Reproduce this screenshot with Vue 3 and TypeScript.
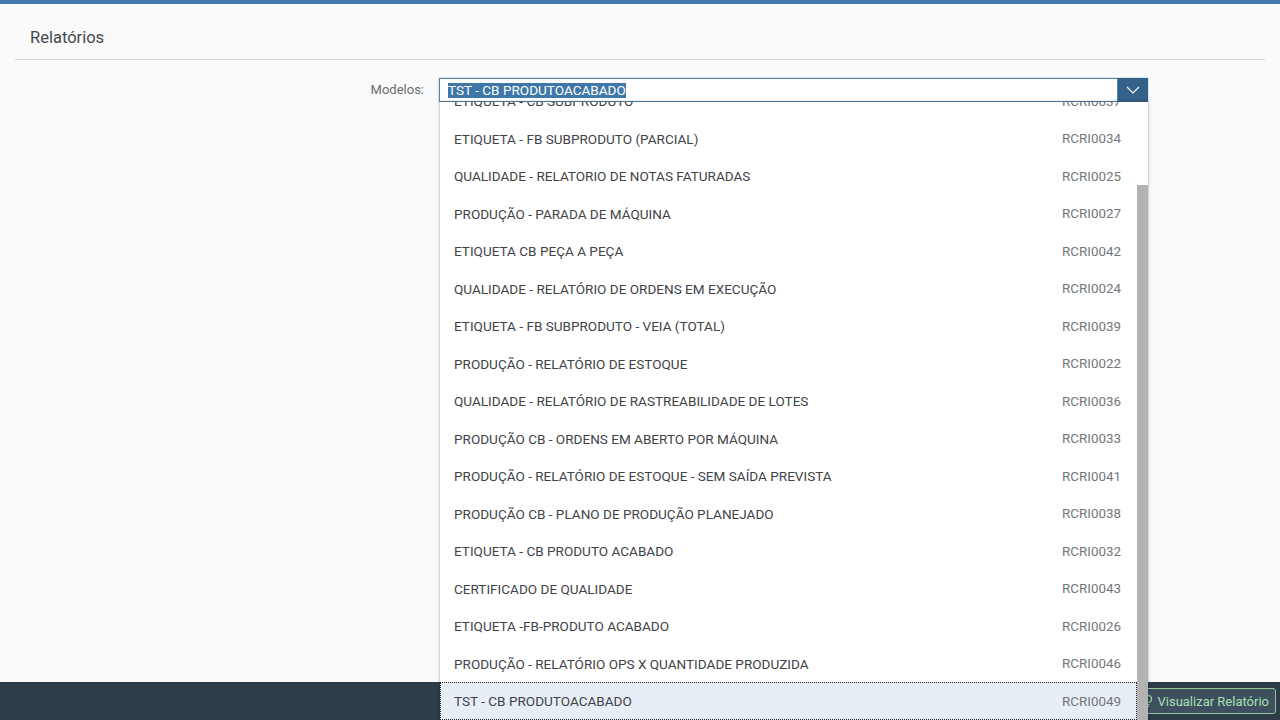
<script setup lang="ts">
const rows: [string, string][] = [
  ['ETIQUETA - CB SUBPRODUTO', 'RCRI0037'],
  ['ETIQUETA - FB SUBPRODUTO (PARCIAL)', 'RCRI0034'],
  ['QUALIDADE - RELATORIO DE NOTAS FATURADAS', 'RCRI0025'],
  ['PRODUÇÃO - PARADA DE MÁQUINA', 'RCRI0027'],
  ['ETIQUETA CB PEÇA A PEÇA', 'RCRI0042'],
  ['QUALIDADE - RELATÓRIO DE ORDENS EM EXECUÇÃO', 'RCRI0024'],
  ['ETIQUETA - FB SUBPRODUTO - VEIA (TOTAL)', 'RCRI0039'],
  ['PRODUÇÃO - RELATÓRIO DE ESTOQUE', 'RCRI0022'],
  ['QUALIDADE - RELATÓRIO DE RASTREABILIDADE DE LOTES', 'RCRI0036'],
  ['PRODUÇÃO CB - ORDENS EM ABERTO POR MÁQUINA', 'RCRI0033'],
  ['PRODUÇÃO - RELATÓRIO DE ESTOQUE - SEM SAÍDA PREVISTA', 'RCRI0041'],
  ['PRODUÇÃO CB - PLANO DE PRODUÇÃO PLANEJADO', 'RCRI0038'],
  ['ETIQUETA - CB PRODUTO ACABADO', 'RCRI0032'],
  ['CERTIFICADO DE QUALIDADE', 'RCRI0043'],
  ['ETIQUETA -FB-PRODUTO ACABADO', 'RCRI0026'],
  ['PRODUÇÃO - RELATÓRIO OPS X QUANTIDADE PRODUZIDA', 'RCRI0046'],
  ['TST - CB PRODUTOACABADO', 'RCRI0049'],
]
</script>

<template>
  <div class="page">
    <header class="title-wrap">
      <h1 class="title">Relatórios</h1>
    </header>
    <main class="form">
      <label class="label">Modelos:</label>
      <div class="combo">
        <div class="input"><span class="sel">TST - CB PRODUTOACABADO</span></div>
        <div class="arrow">
          <svg width="14" height="8" viewBox="0 0 14 8"><path d="M1 1l6 6 6-6" fill="none" stroke="#fff" stroke-width="1.1" /></svg>
        </div>
        <div class="popup">
          <div class="scroller">
            <div
              v-for="(r, i) in rows"
              :key="r[1]"
              class="row"
              :class="{ active: i === rows.length - 1 }"
            >
              <span>{{ r[0] }}</span>
              <span class="code">{{ r[1] }}</span>
            </div>
          </div>
          <div class="thumb"></div>
        </div>
      </div>
    </main>
    <footer class="footer">
      <button class="btn">
        <svg class="btn-icon" width="12" height="14" viewBox="0 0 12 14">
          <circle cx="6" cy="5" r="3.5" fill="none" stroke="#9fd8a8" stroke-width="1.2" />
          <path d="M4.5 10.5h3M5 12.5h2" stroke="#9fd8a8" stroke-width="1.2" />
        </svg>
        <span>Visualizar Relatório</span>
      </button>
    </footer>
  </div>
</template>

<style>
html, body { margin: 0; padding: 0; }
</style>

<style scoped>
.page {
  position: relative;
  width: 1280px;
  height: 720px;
  overflow: hidden;
  box-sizing: border-box;
  display: flex;
  flex-direction: column;
  background: #fafafa;
  border-top: 4px solid #427cac;
  font-family: Roboto, "Liberation Sans", sans-serif;
  color: #32363a;
}
.title-wrap {
  margin: 0 15px;
  height: 56px;
  box-sizing: border-box;
  border-bottom: 1px solid #d4d4d4;
  padding-left: 15px;
  padding-bottom: 9px;
  display: flex;
  align-items: flex-end;
}
.title {
  margin: 0;
  font-size: 16.5px;
  line-height: 24px;
  font-weight: 400;
  color: #44484c;
}
.form {
  flex: 1;
  padding-top: 18px;
  display: flex;
  align-items: flex-start;
}
.label {
  width: 424px;
  box-sizing: border-box;
  text-align: right;
  font-size: 13px;
  line-height: 24px;
  color: #6a6d70;
}
.combo {
  position: relative;
  margin-left: 15px;
  width: 709px;
  height: 24px;
  display: flex;
  box-shadow: 0 0 0 1px #d5e3ef;
}
.input {
  flex: 1;
  box-sizing: border-box;
  height: 24px;
  background: #fff;
  border: 1px solid #5b82a3;
  padding-left: 8px;
  font-size: 13.55px;
  line-height: 22px;
  color: #32363a;
  white-space: nowrap;
}
.sel { background: #3f77a8; color: #fff; display: inline-block; line-height: 15px; }
.arrow {
  width: 30px;
  height: 24px;
  background: #346187;
  display: flex;
  align-items: center;
  justify-content: center;
}
.popup {
  position: absolute;
  left: 1px;
  top: 24px;
  width: 708px;
  height: 620px;
  background: #fff;
  box-shadow: 0 0 3px rgba(0, 0, 0, 0.35);
  overflow: hidden;
  z-index: 5;
}
.scroller { margin-top: -19.75px; width: 697px; }
.row {
  box-sizing: border-box;
  height: 37.5px;
  padding: 0 16px 0 14px;
  display: flex;
  justify-content: space-between;
  align-items: center;
  font-size: 13.55px;
  color: #3f4347;
  white-space: nowrap;
}
.row.active {
  background: #e7eef6;
  outline: 1px dotted #222;
  outline-offset: -1px;
}
.code { color: #74777a; font-size: 13.4px; }
.thumb {
  position: absolute;
  right: 0;
  top: 83px;
  width: 11px;
  bottom: 0;
  background: #b3b3b3;
}
.footer {
  height: 38px;
  background: #2e3c49;
  display: flex;
  align-items: center;
  justify-content: flex-end;
  padding-right: 4px;
}
.btn {
  height: 26px;
  box-sizing: border-box;
  background: #3e4f5f;
  border: 1px solid #8cc795;
  border-radius: 3px;
  color: #a7e0b0;
  font: inherit;
  font-size: 13px;
  padding: 0 6px 0 4px;
  display: flex;
  align-items: center;
  gap: 3px;
}
</style>
